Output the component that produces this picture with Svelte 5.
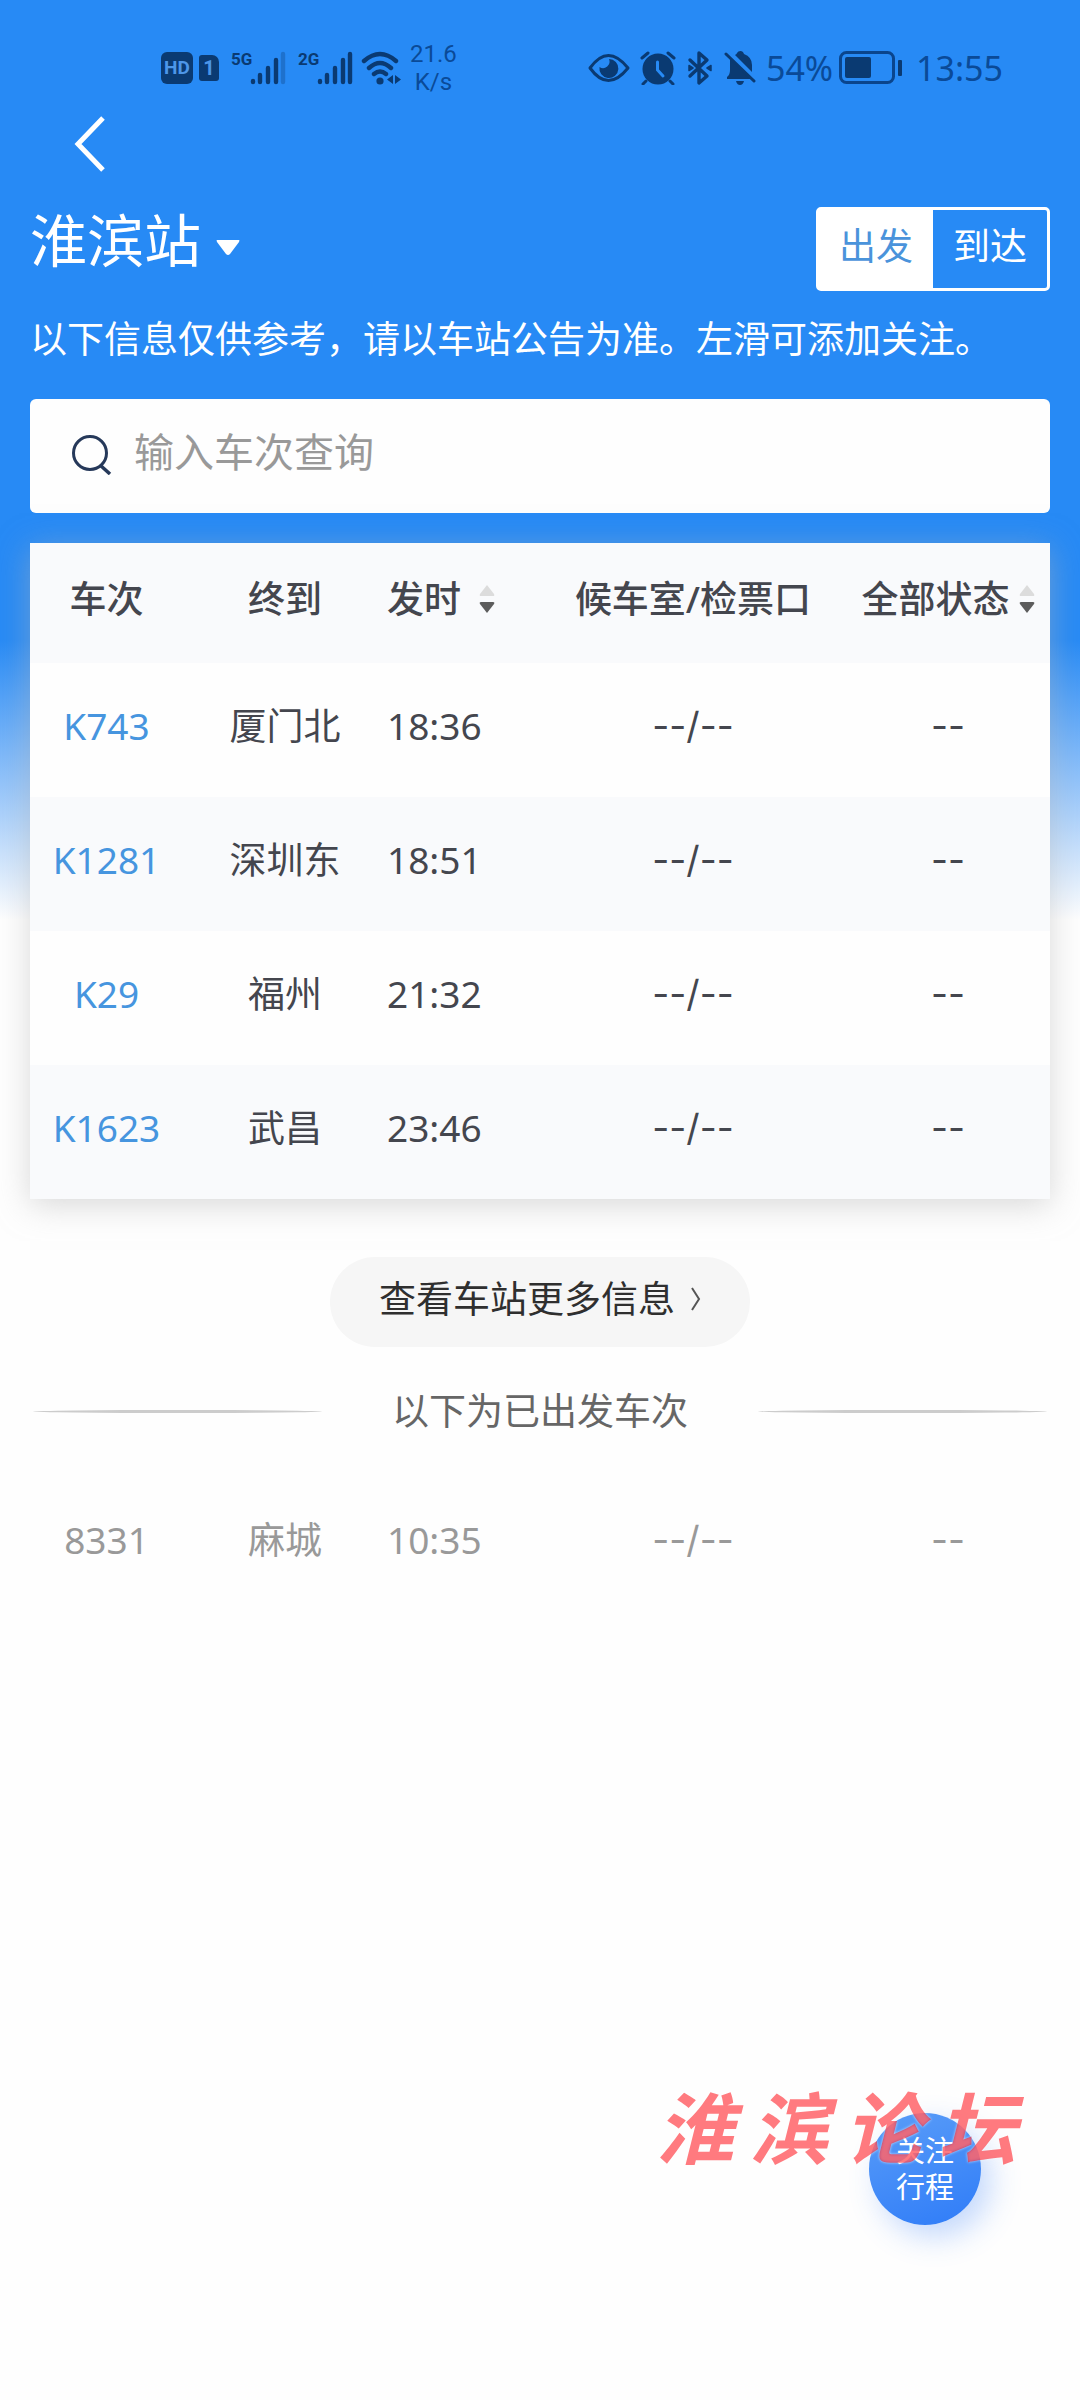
<script>
    let direction = $state("出发");
    let query = $state("");

    const trains = [
        { no: "K743", to: "厦门北", time: "18:36" },
        { no: "K1281", to: "深圳东", time: "18:51" },
        { no: "K29", to: "福州", time: "21:32" },
        { no: "K1623", to: "武昌", time: "23:46" }
    ];
    const departed = [{ no: "8331", to: "麻城", time: "10:35" }];
    const forum = ["淮", "滨", "论", "坛"];

    // Filter on train number, empty query shows everything
    let visible = $derived(trains.filter((t) => t.no.includes(query.trim().toUpperCase())));
</script>

{#snippet columns()}
    <colgroup>
        <col class="w15" />
        <col class="w20" />
        <col class="w15" />
        <col class="w30" />
        <col class="w20" />
    </colgroup>
{/snippet}

{#snippet sortIcon()}
    <svg class="sort" viewBox="0 0 16 28" width="16" height="28" aria-hidden="true">
        <path d="M8 0 L15 9 Q16 11 14 11 H2 Q0 11 1 9 Z" fill="#dcdcdc" />
        <path d="M8 28 L15 19 Q16 17 14 17 H2 Q0 17 1 19 Z" fill="#5c5c5c" />
    </svg>
{/snippet}

{#snippet signal(label, last)}
    <div class="signal">
        <span>{label}</span>
        <svg viewBox="0 0 36 34" width="36" height="34" stroke="#0a3a72" stroke-width="4.4" stroke-linecap="round">
            <path d="M3 31 V30 M10 31 V24 M18 31 V17 M26 31 V9" />
            <path d="M33 31 V3" opacity={last} />
        </svg>
    </div>
{/snippet}

<div class="page">
    <div class="status-bar">
        <div class="group">
            <span class="hd">HD</span>
            <span class="sim">1</span>
            {@render signal("5G", 0.3)}
            {@render signal("2G", 1)}
            <svg class="wifi" viewBox="0 0 40 34" width="40" height="34" fill="none" stroke="#0a3a72" stroke-width="4.4" stroke-linecap="round">
                <path d="M3 10 Q19 -4 35 10 M8 17 Q19 7 30 17 M13 23 Q19 18 25 23" />
                <circle cx="19" cy="30" r="3.6" fill="#0a3a72" stroke="none" />
                <path d="M32 24 V33 L26 28.5 Z M34 24 V33 L40 28.5 Z" fill="#0a3a72" stroke="none" />
            </svg>
            <div class="speed">21.6<br />K/s</div>
        </div>
        <div class="group right">
            <svg viewBox="0 0 42 28" width="42" height="28" fill="none" stroke="#0a3a72" stroke-width="3">
                <path d="M2 14 Q20 -11 40 14 Q20 39 2 14 Z" stroke-linejoin="round" />
                <path d="M21 5 a9.5 9.5 0 1 1 -9.5 8 a6.5 6.5 0 0 0 9.5 -8 Z" fill="#0a3a72" stroke="none" />
            </svg>
            <svg viewBox="0 0 36 34" width="36" height="34" fill="none" stroke="#0a3a72" stroke-width="3" stroke-linecap="round">
                <circle cx="18" cy="18" r="15.5" fill="#0a3a72" stroke="none" />
                <path d="M2 7 L8 2 M34 7 L28 2 M6 30 L3 33 M30 30 L33 33" />
                <path d="M17.5 11 V19 L23 25" stroke="#278af5" />
            </svg>
            <svg viewBox="0 0 28 36" width="28" height="36" fill="none" stroke="#0a3a72" stroke-width="3.4" stroke-linejoin="round" stroke-linecap="round">
                <path d="M4 10 L21 26 L13 33 V3 L21 10 L4 26" />
                <path d="M3 15.5 L7 18 L3 20.5 Z M25 15.5 L21 18 L25 20.5 Z" fill="#0a3a72" stroke-width="1.5" />
            </svg>
            <svg viewBox="0 0 32 34" width="32" height="34" fill="#0a3a72">
                <path d="M11 4 Q13 3 13 2 Q14 0 16.5 0 Q19 0 20 3 Q28 6 28 14 V21 Z" />
                <path d="M6 7 L28 28 H3 V26 Q6 24 6 19 Z" />
                <path d="M12 30 H20 Q19 34 16 34 Q13 34 12 30 Z" />
                <path d="M2 3 L30 30" stroke="#0a3a72" stroke-width="3" stroke-linecap="round" />
            </svg>
            <span class="clock">54%</span>
            <svg class="battery" viewBox="0 0 64 34" width="64" height="34">
                <rect x="1.5" y="1.5" width="53" height="30" rx="6" fill="none" stroke="#0a458d" stroke-width="3" />
                <rect x="6" y="6" width="26" height="21" rx="2" fill="#0a3a72" />
                <rect x="59" y="9" width="4" height="16" rx="1" fill="#0a3a72" />
            </svg>
            <time class="clock">13:55</time>
        </div>
    </div>

    <nav>
        <button class="back" aria-label="返回">
            <svg viewBox="0 0 32 56" width="32" height="56" fill="none" stroke="#fff" stroke-width="5">
                <path d="M29 2 L4 28 L29 54" />
            </svg>
        </button>
    </nav>

    <main>
        <header>
            <button class="station" aria-haspopup="listbox">
                <h1>淮滨站</h1>
                <svg viewBox="0 0 24 16" width="24" height="16" aria-hidden="true">
                    <path d="M1 0 H23 Q24 0 23 2 L14 14 Q12 16 10 14 L1 2 Q0 0 1 0 Z" fill="#fff" />
                </svg>
            </button>
            <div class="toggle" role="group" aria-label="方向">
                {#each ["出发", "到达"] as name}
                    <button aria-pressed={direction === name} class:active={direction === name} onclick={() => (direction = name)}>{name}</button>
                {/each}
            </div>
        </header>

        <p class="notice">以下信息仅供参考，请以车站公告为准。左滑可添加关注。</p>

        <label class="search">
            <svg viewBox="0 0 40 40" width="40" height="40" fill="none" stroke="#26395a" stroke-width="3" aria-hidden="true">
                <circle cx="18" cy="18" r="16.5" />
                <path d="M28 30 L38 39" stroke-width="3.5" />
            </svg>
            <input type="text" placeholder="输入车次查询" aria-label="输入车次查询" bind:value={query} />
        </label>

        <table class="board">
            {@render columns()}
            <thead>
                <tr>
                    <th scope="col">车次</th>
                    <th scope="col">终到</th>
                    <th scope="col" class="time"><button class="wide">发时{@render sortIcon()}</button></th>
                    <th scope="col">候车室/检票口</th>
                    <th scope="col"><button>全部状态{@render sortIcon()}</button></th>
                </tr>
            </thead>
            <tbody>
                {#each visible as train (train.no)}
                    <tr>
                        <td><a href="#{train.no}">{train.no}</a></td>
                        <td>{train.to}</td>
                        <td class="time">{train.time}</td>
                        <td class="dash">--/--</td>
                        <td class="dash">--</td>
                    </tr>
                {/each}
            </tbody>
        </table>

        <button class="more">
            查看车站更多信息
            <svg viewBox="0 0 10 24" width="10" height="24" fill="none" stroke="#555" stroke-width="2" aria-hidden="true">
                <path d="M1 1 L8 12 L1 23" />
            </svg>
        </button>

        <h2>以下为已出发车次</h2>

        <table class="departed">
            {@render columns()}
            <tbody>
                {#each departed as train (train.no)}
                    <tr>
                        <td>{train.no}</td>
                        <td>{train.to}</td>
                        <td class="time">{train.time}</td>
                        <td class="dash">--/--</td>
                        <td class="dash">--</td>
                    </tr>
                {/each}
            </tbody>
        </table>
    </main>

    <button class="follow">关注<br />行程</button>
    <div class="watermark">
        {#each forum as char}
            <span>{char}</span>
        {/each}
    </div>
</div>

<style>
    :global(body) {
        background: #fefefe;
    }

    .page {
        position: relative;
        min-height: 100vh;
        box-sizing: border-box;
        background: linear-gradient(#278af5 0, #278af5 640px, #90c2fa 780px, #fefefe 920px);
        font-family: "Noto Sans", "Noto Sans CJK SC", sans-serif;
        font-size: 37px;
        line-height: 56px;
        color: #44464e;
    }

    button {
        font: inherit;
        color: inherit;
        background: none;
        border: 0;
        padding: 0;
        cursor: pointer;
    }

    svg {
        flex: none;
    }

    /* status bar */
    .status-bar {
        display: flex;
        justify-content: space-between;
        align-items: center;
        height: 68px;
        padding: 34px 77px 0 161px;
        color: #0a3a72;
    }
    .group {
        display: flex;
        align-items: center;
    }
    .right {
        gap: 10px;
    }
    .hd {
        width: 32px;
        border-radius: 6px;
        background: #0a3a72;
        color: #4d96e8;
        font: 700 19px/32px Roboto, sans-serif;
        text-align: center;
    }
    .sim {
        width: 20px;
        margin-left: 6px;
        border-radius: 3px 7px 3px 3px;
        background: #0a3a72;
        color: #4d96e8;
        font: 700 20px/26px Roboto, sans-serif;
        text-align: center;
    }
    .signal {
        display: flex;
        margin-left: 12px;
        span {
            width: 19px;
            font: 700 17px/16px "Liberation Sans Narrow", Roboto, sans-serif;
        }
    }
    .wifi {
        margin-left: 8px;
    }
    .speed {
        margin-left: 9px;
        font: 24px/28px Roboto, sans-serif;
        color: #0a4a98;
        text-align: center;
    }
    .clock {
        font-size: 34px;
        color: #0a4a98;
    }
    .battery {
        margin: 0 3px 0 -4px;
    }

    nav {
        display: flex;
        align-items: center;
        height: 84px;
        padding: 0 74px;
    }
    .back {
        display: flex;
    }

    main {
        display: flex;
        flex-direction: column;
        padding: 21px 30px 0;
    }

    header {
        display: flex;
        justify-content: space-between;
        align-items: stretch;
        height: 84px;
        color: #fff;
    }
    .station {
        display: flex;
        align-items: center;
        gap: 15px;
        padding-bottom: 18px;
        svg {
            margin-top: 16px;
        }
    }
    h1 {
        margin: 0;
        font-size: 57px;
        line-height: 66px;
        font-weight: 400;
    }
    .toggle {
        display: flex;
        border: 3px solid #fff;
        border-radius: 5px;
        box-sizing: border-box;
        button {
            width: 114px;
            padding-bottom: 6px;
        }
        .active {
            background: #fff;
            color: #4a93db;
        }
    }

    .notice {
        margin: 20px 0 0;
        color: #fff;
        white-space: nowrap;
    }

    .search {
        display: flex;
        align-items: center;
        gap: 22px;
        height: 114px;
        margin-top: 32px;
        padding: 0 42px 2px;
        box-sizing: border-box;
        border-radius: 6px;
        background: #fefefe;
        input {
            flex: 1;
            min-width: 0;
            height: 64px;
            margin-bottom: 8px;
            padding: 0;
            border: 0;
            outline: 0;
            background: none;
            font: inherit;
            font-size: 40px;
            color: #44464e;
        }
        input::placeholder {
            color: #999;
            opacity: 1;
        }
    }

    table {
        width: 100%;
        table-layout: fixed;
        border-collapse: collapse;
        text-align: center;
    }
    .w15 {
        width: 15%;
    }
    .w20 {
        width: 20%;
    }
    .w30 {
        width: 30%;
    }
    th,
    td {
        height: 134px;
        padding: 0 0 8px;
        box-sizing: border-box;
        white-space: nowrap;
    }
    th {
        height: 120px;
        font-weight: 500;
        button {
            display: inline-flex;
            align-items: center;
            gap: 9px;
        }
        .wide {
            gap: 18px;
        }
    }
    .time {
        text-align: left;
    }
    .dash {
        font-family: Inter, sans-serif;
    }
    .board {
        margin-top: 30px;
        background: #fefefe;
        box-shadow: 0 6px 30px rgba(180, 180, 180, 0.5);
        thead tr,
        tbody tr:nth-child(even) {
            background: #f9fafc;
        }
        a {
            color: #4695df;
            text-decoration: none;
        }
    }

    .more {
        display: flex;
        align-items: center;
        justify-content: center;
        align-self: center;
        gap: 16px;
        height: 90px;
        margin-top: 58px;
        padding: 0 49px 6px;
        border-radius: 45px;
        background: #f6f6f6;
        color: #2f2f2f;
    }

    h2 {
        display: flex;
        align-items: center;
        gap: 70px;
        margin: 36px 3px 0;
        font-size: 37px;
        font-weight: 400;
        color: #666;
    }
    /* tapered rules on both sides of the title */
    h2::before,
    h2::after {
        content: "";
        flex: 1;
        height: 3px;
        border-radius: 50%;
        background: #ccc;
    }

    .departed {
        margin-top: 38px;
        color: #999;
    }

    .follow {
        position: absolute;
        right: 99px;
        bottom: 175px;
        width: 112px;
        height: 112px;
        border-radius: 50%;
        background: linear-gradient(160deg, #5a9df8, #2f7cf8);
        box-shadow: 10px 12px 30px rgba(60, 130, 250, 0.3);
        color: #fff;
        font-size: 29px;
        line-height: 36px;
    }
    .watermark {
        position: absolute;
        right: 64px;
        bottom: 228px;
        display: flex;
        gap: 16px;
        font-family: "Noto Sans CJK SC", sans-serif;
        font-size: 78px;
        font-weight: 700;
        font-style: italic;
        line-height: 96px;
        color: rgba(255, 0, 10, 0.52);
        text-shadow: 0 0 3px rgba(255, 255, 255, 0.7);
        pointer-events: none;
    }
</style>
